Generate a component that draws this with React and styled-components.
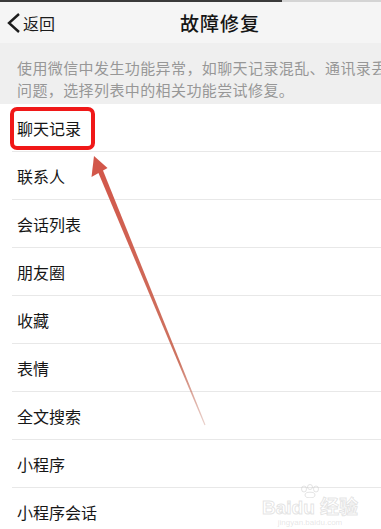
import React from 'react';
import styled, { createGlobalStyle } from 'styled-components';

const GlobalStyle = createGlobalStyle`
  html, body {
    margin: 0;
    padding: 0;
    background: #ffffff;
  }
  body {
    font-family: "Noto Sans CJK SC", "Noto Sans", sans-serif;
    overflow: hidden;
  }
`;

const Page = styled.div`
  position: relative;
  width: 381px;
  height: 529px;
  overflow: hidden;
  background: #ffffff;
`;

const TopStrip = styled.div`
  height: 2px;
  background: linear-gradient(to right, #3a3a3a 0, #3a3a3a 282px, #d4d4d4 282px);
`;

const NavBar = styled.div`
  display: flex;
  align-items: center;
  height: 41px;
  background: #f5f5f5;
`;

const Back = styled.div`
  display: flex;
  align-items: center;
  width: 180px;
  padding-left: 6px;
  box-sizing: border-box;
  color: #1c1c1c;
  font-size: 16px;
  gap: 2px;
`;

const Title = styled.div`
  font-size: 19px;
  font-weight: 500;
  color: #151515;
  letter-spacing: 1px;
`;

const Desc = styled.div`
  background: #efefef;
  padding: 14px 0 3px 17px;
  color: #979797;
  font-size: 15px;
  line-height: 22px;
  letter-spacing: 0.4px;
  white-space: nowrap;
  overflow: hidden;
`;

const List = styled.div`
  background: #ffffff;
`;

const Row = styled.div`
  position: relative;
  padding-left: 12px;
`;

const RowInner = styled.div`
  display: flex;
  align-items: center;
  height: 47px;
  padding-left: 5px;
  border-bottom: 1px solid #e8e8e8;
  font-size: 16px;
  color: #161616;
`;

const Highlight = styled.div`
  position: absolute;
  left: 10px;
  top: 3px;
  width: 85px;
  height: 43px;
  box-sizing: border-box;
  border: 4px solid #f01818;
  border-radius: 7px;
`;

const Overlay = styled.svg`
  position: absolute;
  left: 0;
  top: 0;
  pointer-events: none;
`;

const Watermark = styled.div`
  position: absolute;
  left: 262px;
  top: 484px;
  display: flex;
  flex-direction: column;
  align-items: center;
  color: rgba(200, 200, 200, 0.45);
  pointer-events: none;
`;

const MarkTitle = styled.div`
  font-family: "Liberation Sans", "Noto Sans CJK SC", sans-serif;
  font-size: 19px;
  font-weight: 700;
  line-height: 20px;
  color: rgba(255, 255, 255, 0.6);
  -webkit-text-stroke: 1px rgba(195, 195, 195, 0.45);
`;

const MarkSub = styled.div`
  font-family: "Liberation Sans", sans-serif;
  font-size: 8px;
  line-height: 10px;
`;

const items = ['聊天记录', '联系人', '会话列表', '朋友圈', '收藏', '表情', '全文搜索', '小程序', '小程序会话'];

export default function App() {
  return (
    <Page>
      <GlobalStyle />
      <TopStrip />
      <NavBar>
        <Back>
          <svg width="15" height="22" viewBox="0 0 15 22">
            <path d="M13 2 L3 11 L13 20" fill="none" stroke="#1c1c1c" strokeWidth="2.4" strokeLinejoin="miter" />
          </svg>
          返回
        </Back>
        <Title>故障修复</Title>
      </NavBar>
      <Desc>
        <div>使用微信中发生功能异常，如聊天记录混乱、通讯录丢失</div>
        <div>问题，选择列表中的相关功能尝试修复。</div>
      </Desc>
      <List>
        {items.map((name, i) => (
          <Row key={name}>
            <RowInner>{name}</RowInner>
            {i === 0 && <Highlight />}
          </Row>
        ))}
      </List>
      <Watermark>
        <svg width="30" height="14" viewBox="0 0 30 14">
          <g fill="none" stroke="rgba(195,195,195,0.45)" strokeWidth="1">
            <ellipse cx="9" cy="5" rx="2.5" ry="3" />
            <ellipse cx="15" cy="3" rx="2.5" ry="2.5" />
            <ellipse cx="21" cy="5" rx="2.5" ry="3" />
            <ellipse cx="15" cy="11" rx="5" ry="2.8" />
          </g>
        </svg>
        <MarkTitle>Baidu 经验</MarkTitle>
        <MarkSub>jingyan.baidu.com</MarkSub>
      </Watermark>
      <Overlay width="381" height="529" viewBox="0 0 381 529">
        <defs>
          <linearGradient id="shaft" x1="100" y1="170" x2="205" y2="425" gradientUnits="userSpaceOnUse">
            <stop offset="0" stopColor="#d2574a" />
            <stop offset="0.75" stopColor="#c8644f" stopOpacity="0.9" />
            <stop offset="1" stopColor="#c27a6a" stopOpacity="0.35" />
          </linearGradient>
        </defs>
        <polygon points="102.4,169 97.6,171 204.5,425.3 205.5,424.8" fill="url(#shaft)" />
        <polygon points="94,156 91.5,177 107.5,168" fill="#d2574a" />
      </Overlay>
    </Page>
  );
}
